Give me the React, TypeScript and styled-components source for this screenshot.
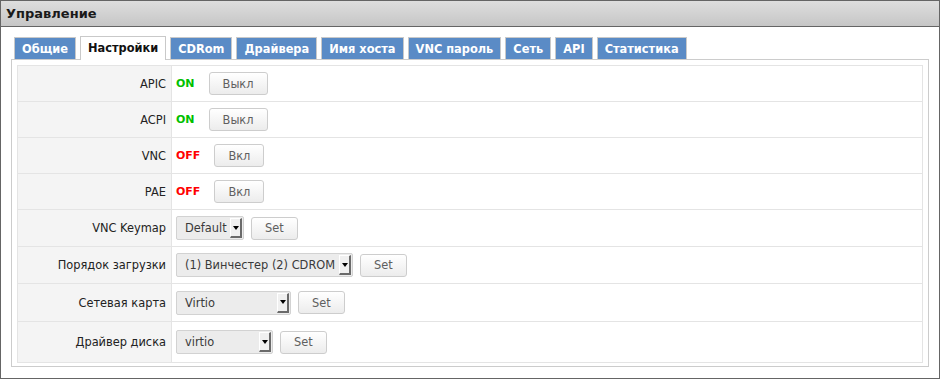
import React from "react";
import styled, { createGlobalStyle } from "styled-components";

const Global = createGlobalStyle`
  html, body { margin: 0; padding: 0; background: #fff; }
  body { font-family: "DejaVu Sans", Verdana, sans-serif; }
  * { box-sizing: border-box; }
`;

const Window = styled.div`
  width: 940px;
  height: 379px;
  border: 1px solid #656565;
  background: #fff;
  display: flex;
  flex-direction: column;
`;

const Header = styled.div`
  height: 26px;
  border-bottom: 1px solid #656565;
  background: linear-gradient(#dedede, #c6c6c6);
  padding-left: 5px;
  display: flex;
  align-items: center;
  font: bold 13px "DejaVu Sans", Verdana, sans-serif;
  color: #1a1a1a;
`;

const Body = styled.div`
  padding: 9px 10px 0 10px;
`;

const TabList = styled.div`
  display: flex;
  align-items: flex-end;
  gap: 4px;
  margin-left: 3px;
  height: 23px;
`;

const Tab = styled.div<{ $active?: boolean }>`
  display: flex;
  align-items: center;
  padding: 0 7px;
  border: 1px solid #c9c9c9;
  border-bottom: none;
  font: bold 11.4px "DejaVu Sans", Verdana, sans-serif;
  height: ${(p) => (p.$active ? "24px" : "22px")};
  margin-bottom: ${(p) => (p.$active ? "-1px" : "0")};
  background: ${(p) => (p.$active ? "#fff" : "#5a8bc6")};
  color: ${(p) => (p.$active ? "#111" : "#fff")};
  position: relative;
  z-index: ${(p) => (p.$active ? 1 : 0)};
  padding-bottom: ${(p) => (p.$active ? "1px" : "0")};
`;

const Panel = styled.div`
  border: 1px solid #cccccc;
  padding: 5px 5px 3px 5px;
  background: #fff;
`;

const Table = styled.div`
  border: 1px solid #e4e4e4;
  display: flex;
  flex-direction: column;
`;

const Row = styled.div<{ $h: number; $last?: boolean }>`
  display: flex;
  height: ${(p) => p.$h}px;
  border-bottom: ${(p) => (p.$last ? "none" : "1px solid #e4e4e4")};
`;

const LabelCell = styled.div`
  width: 154px;
  flex: none;
  background: #f4f4f4;
  border-right: 1px solid #e4e4e4;
  display: flex;
  align-items: center;
  justify-content: flex-end;
  padding-right: 5px;
  font: 11.4px "DejaVu Sans", Verdana, sans-serif;
  color: #222;
`;

const ValueCell = styled.div`
  flex: 1;
  display: flex;
  align-items: center;
  padding-left: 4px;
  gap: 7px;
`;

const Status = styled.span<{ $on: boolean }>`
  font: bold 11px "DejaVu Sans", Verdana, sans-serif;
  color: ${(p) => (p.$on ? "#00c000" : "#ff0000")};
  margin-right: 7px;
`;

const Button = styled.button`
  height: 23px;
  padding: 0 13px;
  border: 1px solid #cdcdcd;
  border-radius: 3px;
  background: linear-gradient(#ffffff, #ececec);
  color: #5f5f5f;
  font: 11.4px "DejaVu Sans", Verdana, sans-serif;
  cursor: pointer;
`;

const SelectBox = styled.div<{ $w: number }>`
  width: ${(p) => p.$w}px;
  height: 24px;
  border: 1px solid #d2d2d2;
  border-radius: 2px;
  background: #ececec;
  display: flex;
  align-items: stretch;
  padding: 1px 1px 1px 0;
`;

const SelectText = styled.span`
  flex: 1;
  display: flex;
  align-items: center;
  padding-left: 8px;
  font: 11.4px "DejaVu Sans", Verdana, sans-serif;
  color: #3a3a3a;
  white-space: nowrap;
  overflow: hidden;
`;

const Arrow = styled.span`
  width: 12px;
  flex: none;
  background: #f0f0f0;
  border-left: 1px solid #fff;
  border-top: 1px solid #fff;
  border-right: 2px solid #6a6a6a;
  border-bottom: 2px solid #6a6a6a;
  display: flex;
  align-items: center;
  justify-content: center;
  &::after {
    content: "";
    width: 0;
    height: 0;
    border-left: 3px solid transparent;
    border-right: 3px solid transparent;
    border-top: 4px solid #000;
  }
`;

const Select = ({ w, value }: { w: number; value: string }) => (
  <SelectBox $w={w}>
    <SelectText>{value}</SelectText>
    <Arrow />
  </SelectBox>
);

const tabs = [
  "Общие",
  "Настройки",
  "CDRom",
  "Драйвера",
  "Имя хоста",
  "VNC пароль",
  "Сеть",
  "API",
  "Статистика",
];

type Item =
  | { label: string; kind: "toggle"; on: boolean; h: number }
  | { label: string; kind: "select"; value: string; w: number; h: number };

const items: Item[] = [
  { label: "APIC", kind: "toggle", on: true, h: 36 },
  { label: "ACPI", kind: "toggle", on: true, h: 36 },
  { label: "VNC", kind: "toggle", on: false, h: 36 },
  { label: "PAE", kind: "toggle", on: false, h: 36 },
  { label: "VNC Keymap", kind: "select", value: "Default", w: 68, h: 37 },
  { label: "Порядок загрузки", kind: "select", value: "(1) Винчестер (2) CDROM", w: 177, h: 37 },
  { label: "Сетевая карта", kind: "select", value: "Virtio", w: 115, h: 38 },
  { label: "Драйвер диска", kind: "select", value: "virtio", w: 97, h: 40 },
];

export default function App() {
  return (
    <>
      <Global />
      <Window>
        <Header>Управление</Header>
        <Body>
          <TabList>
            {tabs.map((t) => (
              <Tab key={t} $active={t === "Настройки"}>
                {t}
              </Tab>
            ))}
          </TabList>
          <Panel>
            <Table>
              {items.map((it, i) => (
                <Row key={it.label} $h={it.h} $last={i === items.length - 1}>
                  <LabelCell>{it.label}</LabelCell>
                  <ValueCell>
                    {it.kind === "toggle" ? (
                      <>
                        <Status $on={it.on}>{it.on ? "ON" : "OFF"}</Status>
                        <Button>{it.on ? "Выкл" : "Вкл"}</Button>
                      </>
                    ) : (
                      <>
                        <Select w={it.w} value={it.value} />
                        <Button>Set</Button>
                      </>
                    )}
                  </ValueCell>
                </Row>
              ))}
            </Table>
          </Panel>
        </Body>
      </Window>
    </>
  );
}
